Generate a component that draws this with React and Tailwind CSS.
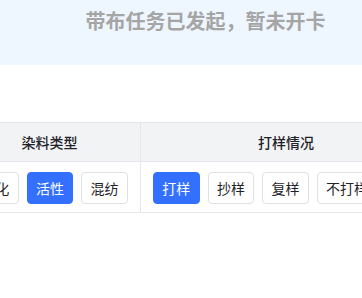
export default function App() {
  const font = { fontFamily: '"Noto Sans CJK SC", "Noto Sans", sans-serif' };
  const Btn = ({ children, active }) => (
    <div
      className={
        "h-[32px] px-[8.3px] flex items-center justify-center rounded-[4px] border text-[14px] leading-none whitespace-nowrap shrink-0 " +
        (active
          ? "bg-[#3370ff] border-[#3370ff] text-white"
          : "bg-white border-[#dee0e3] text-[#1f2329]")
      }
    >
      {children}
    </div>
  );
  return (
    <div className="w-[362px] h-[298px] overflow-hidden bg-white" style={font}>
      <div className="ml-[-41px] w-[493px]">
        <div className="h-[65px] bg-[#eef6ff] pt-[7px] text-center text-[20px] font-bold leading-[28px] text-[#a5a5a5]">
          带布任务已发起，暂未开卡
        </div>
        <div className="h-[57px]" />
        <div className="flex border-t border-b border-[#e5e6eb] w-[472px]">
          <div className="w-[182px] shrink-0 border-r border-[#e5e6eb] flex flex-col">
            <div className="h-[39px] bg-[#f2f3f5] border-b border-[#e5e6eb] flex items-center justify-center text-[14px] font-medium text-[#1f2329]">
              染料类型
            </div>
            <div className="pt-[10px] pb-[8px] pl-[13px] flex gap-2">
              <Btn>硫化</Btn>
              <Btn active>活性</Btn>
              <Btn>混纺</Btn>
            </div>
          </div>
          <div className="w-[290px] shrink-0 flex flex-col">
            <div className="h-[39px] bg-[#f2f3f5] border-b border-[#e5e6eb] flex items-center justify-center text-[14px] font-medium text-[#1f2329]">
              打样情况
            </div>
            <div className="pt-[10px] pb-[8px] pl-[12px] flex gap-2">
              <Btn active>打样</Btn>
              <Btn>抄样</Btn>
              <Btn>复样</Btn>
              <Btn>不打样</Btn>
            </div>
          </div>
        </div>
      </div>
    </div>
  );
}
